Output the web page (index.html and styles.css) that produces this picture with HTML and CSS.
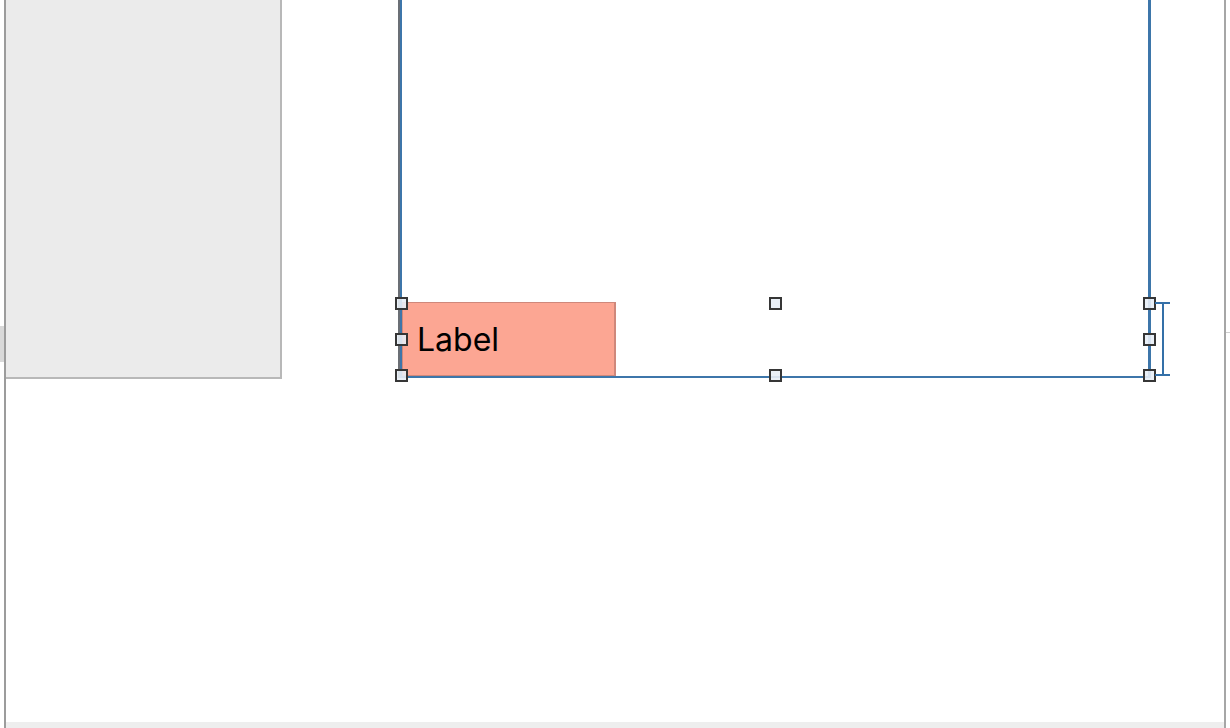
FILE: index.html
```html
<!DOCTYPE html>
<html>
<head>
<meta charset="utf-8">
<link rel="stylesheet" href="styles.css">
</head>
<body>
<div class="app">
  <div class="gutter"><div class="tab"></div></div>
  <div class="window">
    <div class="canvas">
      <div class="panel"></div>
      <div class="frame"></div>
      <div class="label"><span>Label</span></div>
      <div class="handle h-l-t"></div>
      <div class="handle h-l-m"></div>
      <div class="handle h-l-b"></div>
      <div class="handle h-c-t"></div>
      <div class="handle h-c-b"></div>
      <div class="handle h-r-t"></div>
      <div class="handle h-r-m"></div>
      <div class="handle h-r-b"></div>
      <svg class="bracket" width="16" height="76" viewBox="0 0 16 76">
        <path d="M0 2H15M8 2V74M0 74H15" fill="none" stroke="#3470a8" stroke-width="2"/>
      </svg>
    </div>
    <div class="statusbar"></div>
  </div>
  <div class="rgutter"><div class="tick"></div></div>
</div>
</body>
</html>
```
FILE: styles.css
```css
html, body {
  margin: 0;
  padding: 0;
  background: #ffffff;
  font-family: Inter, "Liberation Sans", sans-serif;
}
.app {
  display: flex;
  width: 1230px;
  height: 728px;
  overflow: hidden;
}
.gutter {
  width: 4px;
  flex: none;
}
.tab {
  margin-top: 326px;
  height: 36px;
  background: #d9d9d9;
}
.window {
  width: 1218px;
  flex: none;
  border-left: 2px solid #9c9c9c;
  border-right: 2px solid #a6a6a6;
  display: flex;
  flex-direction: column;
}
.canvas {
  flex: 1;
  position: relative;
}
.statusbar {
  height: 6px;
  background: #eeeeee;
}
.rgutter {
  flex: 1;
  position: relative;
}
.tick {
  margin-top: 332px;
  height: 1px;
  background: #cfcfcf;
}
.panel {
  position: absolute;
  left: 0;
  top: 0;
  width: 274px;
  height: 377px;
  background: #ebebeb;
  border-right: 2px solid #b8b8b8;
  border-bottom: 2px solid #b8b8b8;
}
.frame {
  position: absolute;
  left: 394px;
  top: -4px;
  width: 746px;
  height: 380px;
  border-left: 2px solid #3d76aa;
  border-right: 3px solid #3d76aa;
  border-bottom: 2px solid #3d76aa;
  box-shadow: -2px 0 0 #6b6f75;
}
.label {
  position: absolute;
  left: 396px;
  top: 302px;
  width: 214px;
  height: 74px;
  box-sizing: border-box;
  background: #fca693;
  border: 1px solid #cf887b;
  border-right-width: 2px;
  display: flex;
  align-items: center;
  padding-left: 14px;
  font-size: 32px;
  color: #000;
}
.handle {
  position: absolute;
  width: 13px;
  height: 13px;
  box-sizing: border-box;
  border: 2px solid #363636;
  background: rgba(232, 238, 246, 0.9);
}
.h-l-t { left: 389px; top: 297px; }
.h-l-m { left: 389px; top: 333px; }
.h-l-b { left: 389px; top: 369px; }
.h-c-t { left: 763px; top: 297px; }
.h-c-b { left: 763px; top: 369px; }
.h-r-t { left: 1137px; top: 297px; }
.h-r-m { left: 1137px; top: 333px; }
.h-r-b { left: 1137px; top: 369px; }
.bracket {
  position: absolute;
  left: 1149px;
  top: 301px;
}
```
